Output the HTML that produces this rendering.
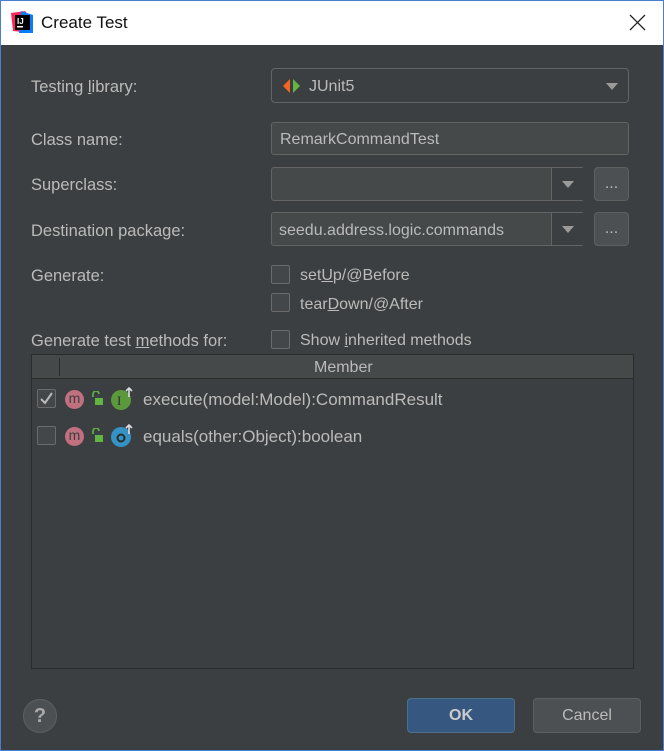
<!DOCTYPE html>
<html><head><style>
*{box-sizing:border-box;margin:0;padding:0}
body{width:664px;height:751px;overflow:hidden;font-family:"Liberation Sans",sans-serif;font-size:16px;color:#bbbbbb;background:#3c3f41;position:relative}
.win{position:absolute;left:0;top:0;width:664px;height:751px;background:#3c3f41}
.frame{position:absolute;left:0;top:0;width:664px;height:751px;border:1px solid #4a7fcf;z-index:9}
.title{position:absolute;left:0;top:0;width:664px;height:45px;background:#fff;color:#111;}
.abs{position:absolute}
.lbl{position:absolute;left:31px;color:#bbbbbb;font-size:16.5px}
.t{position:relative;top:1px}
.field{position:absolute;background:#45494a;border:1px solid #646464;border-radius:3px}
.cb{position:absolute;width:19px;height:19px;border:1px solid #6b6b6b;border-radius:2px;background:#43474a}
.tri{position:absolute;width:0;height:0;border-left:6px solid transparent;border-right:6px solid transparent;border-top:7px solid #9a9a9a}
.btn{position:absolute;border:1px solid #5e6060;border-radius:4px;background:#4c5052;text-align:center}
.m{position:absolute;width:19px;height:19px;border-radius:50%;background:#c0707f;color:#3c3f41;font-size:14px;line-height:16px;text-align:center}
</style></head><body><div class="frame"></div><div class="win">
<div class="title">
<svg class="abs" style="left:11px;top:11px" width="22" height="22"><polygon points="0,2 14,0 22,10 20,22 2,20" fill="#fe2857"/><polygon points="10,0 22,4 22,22 8,22" fill="#087cfa"/><rect x="4" y="4" width="15" height="15" fill="#000"/><text x="6" y="13" fill="#fff" font-size="8" font-weight="bold" font-family="Liberation Sans">IJ</text><rect x="6" y="15" width="6" height="1.5" fill="#fff"/></svg>
<div class="abs" style="left:41px;top:13px;font-size:17px">Create Test</div>
<svg class="abs" style="left:629px;top:14px" width="17" height="17"><path d="M1 1L16 16M16 1L1 16" stroke="#222" stroke-width="1.3"/></svg>
</div>
<div class="lbl" style="top:78px">Testing <u>l</u>ibrary:</div>
<div class="field" style="left:271px;top:68px;width:358px;height:35px;border-radius:4px;background:#3c3f41">
<svg class="abs" style="left:11px;top:10px" width="18" height="14"><polygon points="7,0 0,7 7,14" fill="#f26522"/><polygon points="10,0 17,7 10,14" fill="#62b543"/></svg>
<div class="abs" style="left:37px;top:9px">JUnit5</div>
<div class="tri" style="left:334px;top:14px"></div></div>
<div class="lbl" style="top:131px">Class name:</div>
<div class="field" style="left:271px;top:122px;width:358px;height:33px"><div class="abs" style="left:8px;top:8px">RemarkCommandTest</div></div>
<div class="lbl" style="top:176px">Superclass:</div>
<div class="field" style="left:271px;top:167px;width:313px;height:34px"><div class="abs" style="left:279px;top:0;width:1px;height:32px;background:#646464"></div><div class="abs" style="left:280px;top:0;width:32px;height:32px;background:#3c3f41"></div><div class="tri" style="left:290px;top:13px"></div></div>
<div class="btn" style="left:594px;top:167px;width:35px;height:34px;line-height:32px">...</div>
<div class="lbl" style="top:222px">Destination package:</div>
<div class="field" style="left:271px;top:212px;width:313px;height:34px"><div class="abs" style="left:7px;top:9px">seedu.address.logic.commands</div><div class="abs" style="left:279px;top:0;width:1px;height:32px;background:#646464"></div><div class="abs" style="left:280px;top:0;width:32px;height:32px;background:#3c3f41"></div><div class="tri" style="left:290px;top:13px"></div></div>
<div class="btn" style="left:594px;top:212px;width:35px;height:34px;line-height:32px">...</div>
<div class="lbl" style="top:267px">Generate:</div>
<div class="cb" style="left:271px;top:265px"></div><div class="abs" style="left:300px;top:267px">set<u>U</u>p/@Before</div>
<div class="cb" style="left:271px;top:293px"></div><div class="abs" style="left:300px;top:296px">tear<u>D</u>own/@After</div>
<div class="lbl" style="top:332px">Generate test <u>m</u>ethods for:</div>
<div class="cb" style="left:271px;top:330px"></div><div class="abs" style="left:300px;top:332px">Show <u>i</u>nherited methods</div>
<div class="abs" style="left:31px;top:354px;width:603px;height:315px;border:1px solid #2b2b2b;background:#3c3f41">
<div class="abs" style="left:0;top:0;width:601px;height:24px;background:#45494a;border-bottom:1px solid #2b2b2b"><div class="abs" style="left:27px;top:3px;width:1px;height:18px;background:#2b2b2b"></div><div class="abs" style="left:282px;top:4px">Member</div></div>
<div class="cb" style="left:5px;top:34px"><svg width="17" height="17"><path d="M3 9L7 13L14 3" stroke="#bbb" stroke-width="2" fill="none"/></svg></div>
<div class="m" style="left:33px;top:35px">m</div>
<svg class="abs" style="left:58px;top:36px" width="14" height="14"><path d="M3 6V3a3 3 0 0 1 6 0" stroke="#62b543" stroke-width="1.6" fill="none"/><rect x="5" y="7" width="8" height="7" fill="#62b543"/></svg>
<svg class="abs" style="left:79px;top:32px" width="24" height="23"><circle cx="10" cy="13" r="10" fill="#5b9a3c"/><text x="6" y="18" font-size="13" fill="#2b2b2b" font-family="Liberation Serif">I</text><path d="M18 10V1M15 4l3-3 3 3" stroke="#ddd" stroke-width="1.6" fill="none"/></svg>
<div class="abs" style="left:111px;top:35px;font-size:17px">execute(model:Model):CommandResult</div>
<div class="cb" style="left:5px;top:71px"></div>
<div class="m" style="left:33px;top:72px">m</div>
<svg class="abs" style="left:58px;top:73px" width="14" height="14"><path d="M3 6V3a3 3 0 0 1 6 0" stroke="#62b543" stroke-width="1.6" fill="none"/><rect x="5" y="7" width="8" height="7" fill="#62b543"/></svg>
<svg class="abs" style="left:79px;top:69px" width="24" height="23"><circle cx="10" cy="13" r="10" fill="#3592c4"/><circle cx="10" cy="14" r="3.5" stroke="#2b2b2b" stroke-width="2" fill="none"/><path d="M18 10V1M15 4l3-3 3 3" stroke="#ddd" stroke-width="1.6" fill="none"/></svg>
<div class="abs" style="left:111px;top:72px;font-size:17px">equals(other:Object):boolean</div>
</div>
<div class="abs" style="left:23px;top:699px;width:34px;height:34px;border-radius:50%;background:#4c5052;border:1px solid #5e6060;text-align:center;line-height:32px;font-size:20px;font-weight:bold;color:#aaa">?</div>
<div class="btn" style="left:407px;top:698px;width:108px;height:35px;line-height:33px;background:#365880;border-color:#4c708c;font-weight:bold;color:#ccc">OK</div>
<div class="btn" style="left:533px;top:698px;width:108px;height:35px;line-height:33px">Cancel</div>
</div></body></html>
